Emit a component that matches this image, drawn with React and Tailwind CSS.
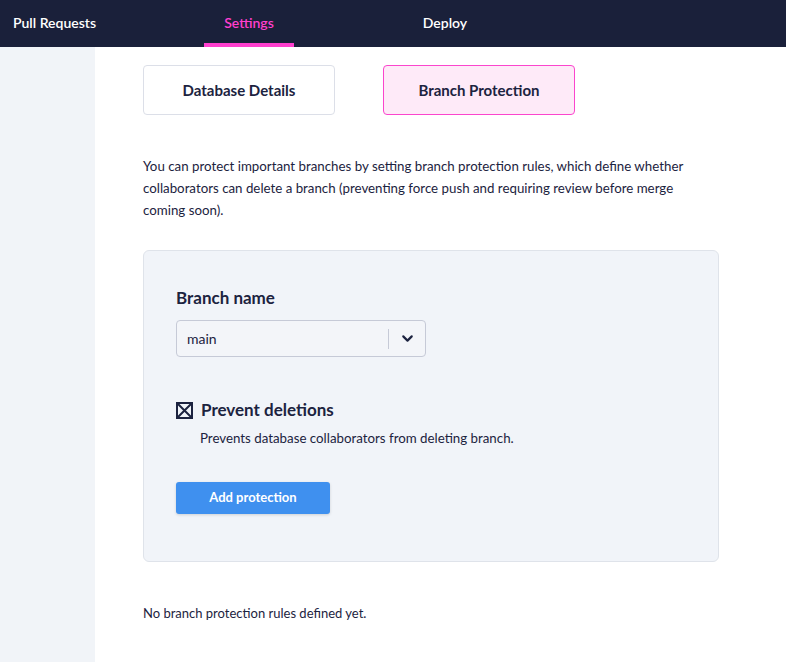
import { ChevronDown } from "lucide-react";

const FONT = { fontFamily: "Lato, 'Noto Sans', sans-serif" };

function NavTab({ label, active, className }) {
  return (
    <div className={`relative flex h-full items-center justify-center pb-[3px] ${className}`}>
      <span className={`whitespace-nowrap text-[14px] font-semibold ${active ? "text-[#ff3fce]" : "text-white"}`}>{label}</span>
      {active && <div className="absolute bottom-0 left-0 right-0 h-[4px] bg-[#ff3fce]" />}
    </div>
  );
}

export default function App() {
  return (
    <div className="flex h-[662px] w-[786px] flex-col overflow-hidden bg-white text-[#1c2340]" style={FONT}>
      {/* Top navigation */}
      <div className="flex h-[47px] shrink-0 items-center bg-[#1a203a]">
        <NavTab label="Pull Requests" className="ml-[13px] w-[80px] justify-start" />
        <NavTab label="Settings" active className="ml-[111px] w-[90px]" />
        <NavTab label="Deploy" className="ml-[106px] w-[90px]" />
      </div>

      <div className="flex flex-1">
        {/* Sidebar */}
        <div className="w-[95px] shrink-0 bg-[#f1f4f8]" />

        {/* Main */}
        <div className="flex-1 pl-[48px] pt-[18px]">
          <div className="flex gap-[48px]">
            <button className="flex h-[50px] w-[192px] items-center justify-center rounded-[4px] border border-[#dcdfe8] bg-white text-[15px] font-bold text-[#1c2340]">
              Database Details
            </button>
            <button className="flex h-[50px] w-[192px] items-center justify-center rounded-[4px] border border-[#fb45cd] bg-[#feeaf8] text-[15px] font-bold text-[#1c2340]">
              Branch Protection
            </button>
          </div>

          <p className="mt-[40px] w-[560px] text-[13.3px] leading-[22px]">
            You can protect important branches by setting branch protection rules, which define whether collaborators can delete a branch (preventing force push and requiring review before merge coming soon).
          </p>

          <div className="mt-[29px] h-[312px] w-[576px] rounded-[6px] border border-[#dfe3ea] bg-[#f1f4f9] pl-[32px] pt-[36px]">
            <div className="text-[17px] font-bold leading-[22px]">Branch name</div>
            <div className="mt-[11px] flex h-[37px] w-[250px] items-center rounded-[4px] border border-[#c6cad7] bg-[#f3f5f9]">
              <span className="flex-1 pl-[10px] text-[14px]">main</span>
              <div className="h-[20px] w-px bg-[#c6cad7]" />
              <div className="flex w-[36px] items-center justify-center">
                <ChevronDown size={17} strokeWidth={3} className="text-[#1c2340]" />
              </div>
            </div>

            <div className="mt-[42px] flex items-center gap-[8px]">
              <svg width="17" height="17" viewBox="0 0 17 17" className="shrink-0">
                <rect x="1" y="1" width="15" height="15" fill="none" stroke="#1c2340" strokeWidth="2" />
                <path d="M2 2L15 15M15 2L2 15" stroke="#1c2340" strokeWidth="2" />
              </svg>
              <span className="text-[17px] font-bold leading-[22px]">Prevent deletions</span>
            </div>
            <p className="mt-[8px] pl-[24px] text-[13.3px] leading-[18px]">Prevents database collaborators from deleting branch.</p>

            <button className="mt-[35px] flex h-[32px] w-[154px] items-center justify-center rounded-[3px] bg-[#3f90ef] text-[13px] font-bold text-white shadow-[0_1px_3px_rgba(0,0,0,0.15)]">
              Add protection
            </button>
          </div>

          <p className="mt-[42px] text-[13px] leading-[18px]">No branch protection rules defined yet.</p>
        </div>
      </div>
    </div>
  );
}
